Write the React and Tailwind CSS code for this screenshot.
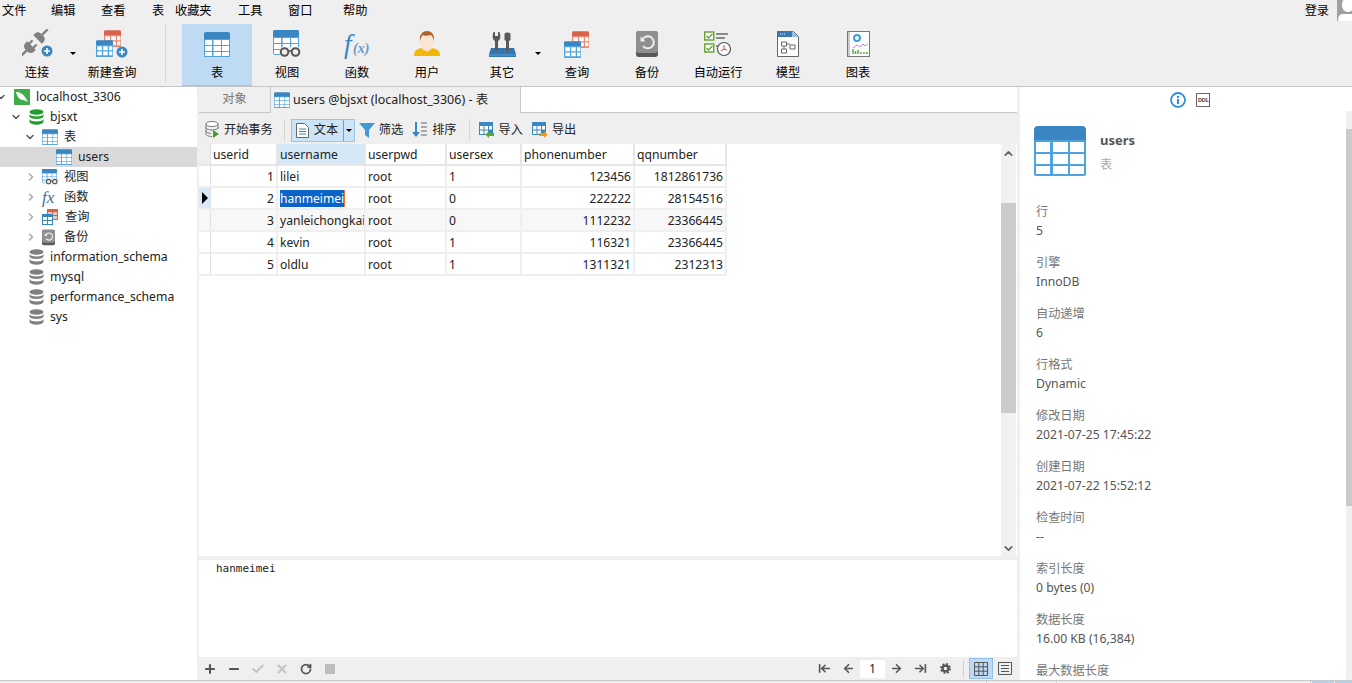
import React from 'react';
import { ArrowLeft, ArrowLeftToLine, ArrowRight, ArrowRightToLine, Check, ChevronDown, ChevronRight, ChevronUp, Minus, Plus, RotateCw, X } from 'lucide-react';

const TableIcon = ({ w = 26, h = 25, head = '#3a86c2', line = '#4fa3de' }) => (
  <svg width={w} height={h} viewBox="0 0 26 25" className="shrink-0">
    <rect x="0" y="0" width="26" height="25" rx="2" fill={head} />
    <rect x="0" y="7" width="26" height="18" rx="1" fill={line} />
    {[1, 9.5, 18].map((x) =>
      [8, 14, 20].map((y) => (
        <rect key={`${x}-${y}`} x={x} y={y} width={x === 9.5 ? 7.5 : 7} height={y === 20 ? 4 : 5} fill="#fff" />
      ))
    )}
  </svg>
);

const DbIcon = ({ color = '#7f7f7f' }) => (
  <svg width="15" height="16" viewBox="0 0 15 16" className="shrink-0">
    <ellipse cx="7.5" cy="3" rx="7" ry="2.8" fill={color} />
    <path d="M.5 5c1 1.800 3.500 2.500 7 2.500s6-.7 7-2.500v2.500c-1 1.800-3.500 2.500-7 2.500s-6-.7-7-2.500z" fill={color} />
    <path d="M.5 10c1 1.800 3.500 2.500 7 2.500s6-.7 7-2.500v3c-1 1.800-3.500 2.800-7 2.800s-6-1-7-2.800z" fill={color} />
  </svg>
);

const PlusBadge = ({ x, y }) => (
  <g>
    <circle cx={x} cy={y} r="5.500" fill="#3a86c2" />
    <path d={`M${x - 3} ${y}h6M${x} ${y - 3}v6`} stroke="#fff" strokeWidth="1.600" />
  </g>
);

const ConnectIcon = () => (
  <svg width="32" height="30" viewBox="0 0 32 30" className="ml-[2px]">
    <g transform="rotate(45 13 13)" fill="#808080">
      <path d="M7 3h12v3c0 2-2 3.500-4 3.500h-4C9 9.500 7 8 7 6z" transform="rotate(180 13 6.200)" />
      <rect x="11.800" y="-5" width="2.400" height="8" />
      <path d="M7 18h12v3c0 2-2 4-4 4h-4c-2 0-4-2-4-4z" />
      <rect x="9" y="13.500" width="2.200" height="5" />
      <rect x="14.800" y="13.500" width="2.200" height="5" />
      <rect x="11.800" y="24" width="2.400" height="8" />
    </g>
    <PlusBadge x={25} y={22} />
  </svg>
);

const QueryPair = () => (
  <>
    <svg x="8" y="0" width="17" height="17" viewBox="0 0 26 25">
      <rect width="26" height="25" rx="2" fill="#d9614a" />
      <rect y="7" width="26" height="18" fill="#e58a74" />
      <path d="M2 9h7v6H2zM11 9h7v6h-7zM20 9h5v6h-5zM2 17h7v6H2zM11 17h7v6h-7zM20 17h5v6h-5z" fill="#fff" />
    </svg>
    <svg x="0" y="10" width="17" height="17" viewBox="0 0 26 25">
      <rect width="26" height="25" rx="2" fill="#3a86c2" />
      <rect y="7" width="26" height="18" fill="#4fa3de" />
      <path d="M2 9h7v6H2zM11 9h7v6h-7zM20 9h5v6h-5zM2 17h7v6H2zM11 17h7v6h-7zM20 17h5v6h-5z" fill="#fff" />
    </svg>
  </>
);

const NewQueryIcon = () => (
  <svg width="33" height="28" viewBox="0 0 33 28">
    <QueryPair />
    <PlusBadge x={26} y={22} />
  </svg>
);

const QueryIcon = () => (
  <svg width="26" height="27" viewBox="0 0 26 27">
    <QueryPair />
  </svg>
);

const ViewIcon = ({ size = 28 }) => (
  <svg width={size} height={size} viewBox="0 0 28 28" className="shrink-0">
    <rect width="26" height="25" rx="2" fill="#4fa3de" />
    <rect width="26" height="7" rx="2" fill="#3a86c2" />
    <path d="M1 8h7v5H1zM9.500 8H17v5H9.500zM18 8h7v5h-7zM1 14h7v5H1zM9.500 14H17v5H9.500zM18 14h7v5h-7zM1 20h7v4H1z" fill="#fff" />
    <rect x="7" y="17" width="21" height="11" fill="#efefef" />
    <circle cx="11.500" cy="22" r="3.800" fill="none" stroke="#555" strokeWidth="2" />
    <circle cx="22.500" cy="22" r="3.800" fill="none" stroke="#555" strokeWidth="2" />
    <path d="M15 21h4" stroke="#555" strokeWidth="1.500" />
  </svg>
);

const FxIcon = () => (
  <svg width="32" height="34" viewBox="0 0 32 34">
    <text x="3" y="26" fontFamily="Liberation Serif" fontStyle="italic" fontSize="27" fill="#3a86c2">f</text>
    <text x="12" y="26" fontFamily="Liberation Serif" fontStyle="italic" fontWeight="700" fontSize="14" fill="#6c98bd">(x)</text>
  </svg>
);

const UserIcon = () => (
  <svg width="26" height="28" viewBox="0 0 26 28">
    <path d="M0 26c0-5 2-7 8-8h10c6 1 8 3 8 8z" fill="#f2b705" />
    <path d="M9 15h8l1 4-5 3-5-3z" fill="#f8dcc8" />
    <ellipse cx="13" cy="11" rx="7" ry="9" fill="#fbe5d6" />
    <path d="M6 11C5 4 9 1 13 1s8 3 7 10c-1-4-2-5-3-6-3 1-7 1-8 0-1 1-2 2-3 6z" fill="#b4622a" />
  </svg>
);

const ToolsIcon = () => (
  <svg width="27" height="26" viewBox="0 0 27 26">
    <path d="M2 17h23l2 6v3H0v-3z" fill="#3278ae" />
    <path d="M0 24h27" stroke="#5b9fd0" />
    <path d="M6 20V10C3.500 9 3 5 4.500 1l1.500 0v4h3V1l1.500 0C12 5 11.500 9 9 10v10z" fill="#595959" />
    <path d="M17 20V10l-1.500-1V3c0-2 6-2 6 0v6L20 10v10z" fill="#595959" />
  </svg>
);

const BackupIcon = ({ size = 22 }) => (
  <svg width={size} height={size + 4} viewBox="0 0 22 26" className="shrink-0">
    <rect width="22" height="26" rx="3" fill="#595959" />
    <rect width="22" height="22" rx="3" fill="#8f8f8f" />
    <path d="M6.500 8.500A6 6 0 1 1 7 15" fill="none" stroke="#eee" strokeWidth="2" />
    <path d="M4.500 5.500v5h5z" fill="#eee" />
  </svg>
);

const AutoRunIcon = () => (
  <svg width="28" height="26" viewBox="0 0 28 26">
    <rect x=".75" y="1" width="9" height="8" fill="#fff" stroke="#6aa53c" strokeWidth="1.500" />
    <path d="M2.500 5l2 2 4-4" fill="none" stroke="#6aa53c" strokeWidth="1.500" />
    <rect x=".75" y="13" width="9" height="8" fill="#fff" stroke="#6aa53c" strokeWidth="1.500" />
    <path d="M2.500 17l2 2 4-4" fill="none" stroke="#6aa53c" strokeWidth="1.500" />
    <path d="M12 3h12M12 7h9M12 15h3" stroke="#8a8a8a" strokeWidth="1.800" />
    <circle cx="20" cy="18" r="6.500" fill="#fff" stroke="#555" strokeWidth="1.200" />
    <path d="M20 14v4l-3 2M20 18l3 1" stroke="#c9503c" strokeWidth="1" fill="none" />
  </svg>
);

const ModelIcon = () => (
  <svg width="22" height="26" viewBox="0 0 22 26">
    <path d="M.5.500h16l5 5v20H.5z" fill="#fff" stroke="#666" />
    <path d="M0 0h15v6H0z" fill="#3a78b0" />
    <path d="M15 0l7 6h-7z" fill="#8fc0e8" />
    <path d="M3 3h1M5 3h1M7 3h1" stroke="#fff" />
    <path d="M4.500 11h5v4h-5zM4.500 18h5v4h-5zM13 14h5v4h-5zM9.500 13H13M7 15v3" fill="none" stroke="#666" strokeWidth="1" />
  </svg>
);

const ChartIcon = () => (
  <svg width="23" height="26" viewBox="0 0 23 26">
    <rect x=".5" y=".5" width="22" height="25" fill="#fff" stroke="#777" />
    <path d="M2 1v24" stroke="#999" />
    <circle cx="10" cy="7" r="3" fill="none" stroke="#35a0dc" strokeWidth="2" />
    <path d="M6 17l4-3 3 2 3-3 2 2 3-2" fill="none" stroke="#c58ad6" strokeWidth="1" />
    <path d="M6 23v-5M8.500 23v-3M11 23v-4M14 23v-2M17 23v-2M20 23v-2" stroke="#57a83c" strokeWidth="1.500" />
  </svg>
);

const MiniQuery = () => (
  <svg width="17" height="17" viewBox="0 0 17 17" className="shrink-0">
    <rect x="5" y="0" width="11" height="11" fill="#d9614a" />
    <path d="M6 3h4v3H6zM11 3h4v3h-4zM11 7h4v3h-4z" fill="#f4c4b8" />
    <rect x="0" y="5" width="11" height="11" fill="#3a86c2" />
    <path d="M1 8h4v3H1zM6 8h4v3H6zM1 12h4v3H1zM6 12h4v3H6z" fill="#fff" />
  </svg>
);

const Caret = () => <span className="block w-0 h-0 border-x-[3px] border-x-transparent border-t-[3px] border-t-black" />;

const TopTool = ({ label, icon, active, width = 'w-[70px]', children }) => (
  <div className={`relative h-[62px] flex flex-col items-center shrink-0 ${width} ${active ? 'bg-[#bfdbf3] border-b border-b-[#90c8f6]' : ''}`}>
    <div className="h-[38px] flex items-center justify-center pt-[2px]">{icon}</div>
    <span className="mt-[3px] leading-[16px] text-black">{label}</span>
    {children}
  </div>
);

const menus = [
  ['文件', 'w-[49px]'],
  ['编辑', 'w-[50px]'],
  ['查看', 'w-[51px]'],
  ['表', 'w-[23px]'],
  ['收藏夹', 'w-[63px]'],
  ['工具', 'w-[50px]'],
  ['窗口', 'w-[55px]'],
  ['帮助', 'w-[40px]'],
];

const TreeRow = ({ pad, chevron, icon, text, gap = 'gap-[6px]', selected }) => (
  <div className={`relative h-[20px] flex items-center ${gap} ${pad} ${selected ? 'bg-[#d9d9d9]' : ''}`}>
    {chevron}
    {icon}
    <span className="text-[#222] whitespace-nowrap">{text}</span>
  </div>
);

const Open = ({ left }) => <ChevronDown size={12} strokeWidth={3} className={`absolute top-[4px] text-[#555] ${left}`} />;
const Shut = () => <ChevronRight size={12} strokeWidth={3} className="absolute top-[4px] left-[25px] text-[#aaa]" />;

const columns = [
  { name: 'userid', w: 'w-[67px]', right: true },
  { name: 'username', w: 'w-[88px]' },
  { name: 'userpwd', w: 'w-[81px]' },
  { name: 'usersex', w: 'w-[75px]' },
  { name: 'phonenumber', w: 'w-[113px]', right: true },
  { name: 'qqnumber', w: 'w-[92px]', right: true },
];

const rows = [
  ['1', 'lilei', 'root', '1', '123456', '1812861736'],
  ['2', 'hanmeimei', 'root', '0', '222222', '28154516'],
  ['3', 'yanleichongkai', 'root', '0', '1112232', '23366445'],
  ['4', 'kevin', 'root', '1', '116321', '23366445'],
  ['5', 'oldlu', 'root', '1', '1311321', '2312313'],
];

const info = [
  ['行', '5'],
  ['引擎', 'InnoDB'],
  ['自动递增', '6'],
  ['行格式', 'Dynamic'],
  ['修改日期', '2021-07-25 17:45:22'],
  ['创建日期', '2021-07-22 15:52:12'],
  ['检查时间', '--'],
  ['索引长度', '0 bytes (0)'],
  ['数据长度', '16.00 KB (16,384)'],
  ['最大数据长度', ''],
];

const SmallTool = ({ icon, label, className = '' }) => (
  <div className={`flex items-center gap-[4px] shrink-0 ${className}`}>
    {icon}
    <span className="text-[#222]">{label}</span>
  </div>
);

const ImportIcon = ({ color, flip }) => (
  <svg width="16" height="16" viewBox="0 0 16 16" className="shrink-0">
    <rect width="14" height="13" fill="#3a86c2" />
    <path d="M1 4h3.500v3.500H1zM5.500 4H9v3.500H5.500zM10 4h3v3.500h-3zM1 8.500h3.500V12H1zM5.500 8.500H9V12H5.500z" fill="#fff" />
    <path d={flip ? 'M7 11h5v-2l3.500 3.500L12 16v-2H7z' : 'M15 11h-5V9l-3.500 3.500L10 16v-2h5z'} fill={color} />
  </svg>
);

export default function App() {
  return (
    <div className="w-[1352px] h-[683px] overflow-hidden flex flex-col bg-white text-[12.2px] font-['Noto_Sans','Noto_Sans_CJK_SC',sans-serif]">
      {/* menu + big toolbar */}
      <header className="h-[87px] shrink-0 bg-[#efefef] border-b border-b-[#c4c4c4]">
        <div className="relative h-[21px] flex items-center pl-[2px] leading-[18px] text-black">
          {menus.map(([m, w]) => (
            <span key={m} className={w}>{m}</span>
          ))}
          <span className="ml-auto mr-[23px]">登录</span>
          <span className="absolute right-0 top-0 w-[15px] h-[21px] bg-[#a0a0a0] overflow-hidden">
            <span className="absolute left-[5px] top-[-2px] w-[12px] h-[14px] rounded-full bg-white" />
            <span className="absolute left-[1px] top-[14px] w-[18px] h-[10px] rounded-full bg-white" />
          </span>
        </div>
        <div className="flex items-start pt-[3px] pl-[2px]">
          <TopTool label="连接" icon={<ConnectIcon />}>
            <span className="absolute left-[68px] top-[28px]"><Caret /></span>
          </TopTool>
          <TopTool label="新建查询" icon={<NewQueryIcon />} width="w-[70px] ml-[5px]" />
          <div className="w-px h-[58px] bg-[#d4d4d4] ml-[18px] mr-[16px]" />
          <TopTool label="表" active icon={<TableIcon />} />
          <TopTool label="视图" icon={<ViewIcon />} />
          <TopTool label="函数" icon={<FxIcon />} />
          <TopTool label="用户" icon={<UserIcon />} />
          <TopTool label="其它" icon={<ToolsIcon />} width="w-[70px] ml-[5px]">
            <span className="absolute left-[68px] top-[28px]"><Caret /></span>
          </TopTool>
          <TopTool label="查询" icon={<QueryIcon />} width="w-[70px] ml-[5px]" />
          <TopTool label="备份" icon={<BackupIcon />} />
          <TopTool label="自动运行" icon={<AutoRunIcon />} width="w-[70px] ml-px" />
          <TopTool label="模型" icon={<ModelIcon />} />
          <TopTool label="图表" icon={<ChartIcon />} />
        </div>
      </header>

      <div className="flex-1 min-h-0 flex">
        {/* connection tree */}
        <aside className="w-[197px] shrink-0 bg-white overflow-hidden">
          <TreeRow
            pad="pl-[14px]"
            text="localhost_3306"
            chevron={<Open left="left-[-5px]" />}
            icon={
              <svg width="16" height="16" viewBox="0 0 16 16" className="shrink-0">
                <rect width="16" height="16" rx="1" fill="#3fae49" />
                <path d="M2 3c4 0 7 2 9 5 1 2 2 3 3 5-2-1-4-2-5-2-3 0-6-3-7-8z" fill="#fff" />
              </svg>
            }
          />
          <TreeRow pad="pl-[29px]" text="bjsxt" chevron={<Open left="left-[10px]" />} icon={<DbIcon color="#1f9e2d" />} />
          <TreeRow pad="pl-[42px]" text="表" chevron={<Open left="left-[24px]" />} icon={<TableIcon w={16} h={16} />} />
          <TreeRow pad="pl-[56px]" text="users" selected icon={<TableIcon w={16} h={16} />} />
          <TreeRow pad="pl-[42px]" text="视图" chevron={<Shut />} icon={<ViewIcon size={16} />} />
          <TreeRow
            pad="pl-[42px]"
            text="函数"
            chevron={<Shut />}
            icon={<span className="w-[16px] font-['Liberation_Serif'] italic text-[17px] leading-none text-[#3a6f9c]">fx</span>}
          />
          <TreeRow pad="pl-[42px]" text="查询" chevron={<Shut />} icon={<MiniQuery />} />
          <TreeRow pad="pl-[42px]" text="备份" chevron={<Shut />} icon={<BackupIcon size={13} />} gap="gap-[9px]" />
          <TreeRow pad="pl-[29px]" text="information_schema" icon={<DbIcon />} />
          <TreeRow pad="pl-[29px]" text="mysql" icon={<DbIcon />} />
          <TreeRow pad="pl-[29px]" text="performance_schema" icon={<DbIcon />} />
          <TreeRow pad="pl-[29px]" text="sys" icon={<DbIcon />} />
        </aside>

        {/* main editor */}
        <main className="w-[823px] shrink-0 bg-[#efefef] flex flex-col min-h-0 pl-[2px] pr-[3px]">
          <div className="h-[26px] shrink-0 flex bg-white">
            <div className="w-[71px] flex items-center justify-center bg-[#efefef] text-[#777] border-b border-b-[#c8c8c8]">对象</div>
            <div className="w-[251px] flex items-center gap-[3px] pl-[3px] bg-[#efefef] border-x border-x-[#c8c8c8] text-[#222] whitespace-nowrap text-[12.5px]">
              <TableIcon w={16} h={16} />
              <span>users @bjsxt (localhost_3306) - 表</span>
            </div>
            <div className="flex-1 border-b border-b-[#c8c8c8]" />
          </div>
          <div className="h-[31px] shrink-0 flex items-center pl-[6px] pt-[3px]">
            <SmallTool
              label="开始事务"
              icon={
                <svg width="15" height="17" viewBox="0 0 15 17" className="shrink-0">
                  <ellipse cx="7" cy="3" rx="6" ry="2.500" fill="#fff" stroke="#777" />
                  <path d="M1 3v10c0 1.500 3 2.500 6 2.500M13 3v5M1 6.500c0 1.500 3 2.500 6 2.500s6-1 6-2.500M1 10c0 1.500 3 2.500 5 2.500" fill="none" stroke="#777" />
                  <path d="M8 9l6 4-6 4z" fill="#4a9c2e" />
                </svg>
              }
            />
            <div className="w-px h-[22px] bg-[#d4d4d4] ml-[11px] mr-[6px]" />
            <div className="w-[64px] h-[23px] flex items-center bg-[#cde3f6] border border-[#98c6ec] shrink-0">
              <div className="flex-1 flex items-center gap-[5px] pl-[4px] border-r border-r-[#7a9ebd] h-full">
                <svg width="13" height="15" viewBox="0 0 13 15" className="shrink-0">
                  <path d="M.5.500h8l4 4v10H.5z" fill="#fff" stroke="#666" />
                  <path d="M3 6h7M3 8.500h7M3 11h7" stroke="#3a86c2" />
                </svg>
                <span className="text-[#222]">文本</span>
              </div>
              <div className="w-[10px] flex justify-center"><Caret /></div>
            </div>
            <SmallTool
              className="ml-[4px]"
              label="筛选"
              icon={
                <svg width="16" height="16" viewBox="0 0 16 16" className="shrink-0">
                  <path d="M0 1h16L10 8v8l-4-3V8z" fill="#3f9ad6" />
                </svg>
              }
            />
            <SmallTool
              className="ml-[9px]"
              label="排序"
              icon={
                <svg width="16" height="17" viewBox="0 0 16 17" className="shrink-0">
                  <path d="M4 1v12" stroke="#3a86c2" strokeWidth="2" />
                  <path d="M0 11h8l-4 5z" fill="#3a86c2" />
                  <path d="M9 2h6M9 6h6M9 10h6M9 14h6" stroke="#666" />
                </svg>
              }
            />
            <div className="w-px h-[22px] bg-[#d4d4d4] ml-[12px] mr-[9px]" />
            <SmallTool label="导入" icon={<ImportIcon color="#5aa53c" />} />
            <SmallTool className="ml-[9px]" label="导出" icon={<ImportIcon color="#e9962c" flip />} />
          </div>

          {/* grid */}
          <div className="h-[412px] shrink-0 flex bg-white min-h-0">
            <div className="flex-1 min-w-0">
              <div className="flex w-fit h-[22px] border-b-2 border-b-[#e6e6e6]">
                <div className="w-[12px] bg-[#efefef] border-r border-r-[#e0e0e0]" />
                {columns.map((c) => (
                  <div
                    key={c.name}
                    className={`${c.w} pl-[2px] border-r-2 border-r-[#e6e6e6] leading-[22px] text-[#222] ${c.name === 'username' ? 'bg-[#d5e8f8]' : ''}`}
                  >
                    {c.name}
                  </div>
                ))}
              </div>
              {rows.map((row, i) => (
                <div key={row[0]} className={`flex w-fit h-[22px] border-b-2 border-b-[#efefef] text-[12.1px] ${i === 2 ? 'bg-[#f7f7f7]' : ''}`}>
                  <div className={`w-[12px] flex items-center pl-[3px] border-r border-r-[#e0e0e0] ${i === 1 ? 'bg-[#d9e9f7]' : ''}`}>
                    {i === 1 && <span className="w-0 h-0 border-y-[6px] border-y-transparent border-l-[6px] border-l-black" />}
                  </div>
                  {row.map((v, j) => (
                    <div
                      key={j}
                      className={`${columns[j].w} px-[2px] border-r-2 border-r-[#efefef] leading-[22px] text-[#222] overflow-hidden whitespace-nowrap ${columns[j].right ? 'text-right' : ''}`}
                    >
                      {i === 1 && j === 1 ? <span className="bg-[#0a64c8] text-white border-r border-r-[#e9762c]">{v}</span> : v}
                    </div>
                  ))}
                </div>
              ))}
            </div>
            <div className="w-[15px] mr-px shrink-0 bg-[#f1f1f1] flex flex-col items-center text-[#606060]">
              <ChevronUp size={13} strokeWidth={3} className="mt-[3px] shrink-0" />
              <div className="w-full h-[210px] mt-[43px] bg-[#cbcbcb] shrink-0" />
              <ChevronDown size={13} strokeWidth={3} className="mt-auto mb-[1px] shrink-0" />
            </div>
          </div>

          {/* cell text preview */}
          <div className="h-[97px] mt-[4px] shrink-0 bg-white pl-[17px] pt-[1px] font-['DejaVu_Sans_Mono',monospace] text-[11px] leading-[15px] text-[#222]">
            hanmeimei
          </div>

          {/* bottom bar */}
          <div className="h-[23px] shrink-0 flex items-center pl-[4px] text-[#555]">
            <Plus size={14} strokeWidth={3.500} />
            <Minus size={14} strokeWidth={3.500} className="ml-[10px]" />
            <Check size={14} strokeWidth={3.500} className="ml-[10px] text-[#c4c4c4]" />
            <X size={14} strokeWidth={3.500} className="ml-[10px] text-[#c4c4c4]" />
            <RotateCw size={12} strokeWidth={3.500} className="ml-[11px]" />
            <span className="ml-[13px] w-[10px] h-[10px] bg-[#bdbdbd]" />
            <ArrowLeftToLine size={13} strokeWidth={3} className="ml-auto" />
            <ArrowLeft size={13} strokeWidth={3} className="ml-[11px]" />
            <span className="ml-[5px] w-[25px] h-[18px] bg-white text-center leading-[18px] text-[#222]">1</span>
            <ArrowRight size={13} strokeWidth={3} className="ml-[5px]" />
            <ArrowRightToLine size={13} strokeWidth={3} className="ml-[11px]" />
            <svg width="11" height="11" viewBox="0 0 12 12" className="ml-[13px] shrink-0">
              <circle cx="6" cy="6" r="3.200" fill="none" stroke="#555" strokeWidth="2.400" />
              <circle cx="6" cy="6" r="5" fill="none" stroke="#555" strokeWidth="2" strokeDasharray="2 1.930" />
            </svg>
            <div className="w-px h-[16px] bg-[#cfcfcf] ml-[12px] mr-[5px]" />
            <div className="w-[24px] h-[21px] flex items-center justify-center bg-[#bfdbf3] border border-[#90c0e8]">
              <svg width="14" height="14" viewBox="0 0 14 14">
                <path d="M.5.500h13v13H.5zM.5 4.800h13M.5 9.200h13M4.800.500v13M9.200.500v13" fill="none" stroke="#555" />
              </svg>
            </div>
            <svg width="14" height="13" viewBox="0 0 14 13" className="ml-[5px] mr-[5px] shrink-0">
              <path d="M.5.500h13v12H.5zM3 3.500h8M3 6.500h8M3 9.500h8" fill="none" stroke="#555" />
            </svg>
          </div>
        </main>

        {/* info panel */}
        <aside className="relative flex-1 min-w-0 bg-white overflow-hidden">
          <div className="h-[25px] flex items-center gap-[10px] pl-[150px]">
            <svg width="16" height="16" viewBox="0 0 16 16">
              <circle cx="8" cy="8" r="7" fill="none" stroke="#2b8fe8" strokeWidth="1.800" />
              <path d="M8 4v2M8 7v5" stroke="#2b8fe8" strokeWidth="2" />
            </svg>
            <span className="w-[14px] h-[14px] border border-[#666] text-[6px] font-bold leading-[12px] text-center text-[#555] tracking-[-0.5px]">DDL</span>
          </div>
          <div className="flex gap-[14px] pl-[14px] pt-[14px]">
            <TableIcon w={52} h={50} />
            <div className="pt-[5px]">
              <div className="font-bold text-[13px] leading-[18px] text-[#555]">users</div>
              <div className="mt-[7px] leading-[18px] text-[#aaa]">表</div>
            </div>
          </div>
          <div className="pl-[16px] pt-[26px]">
            {info.map(([k, v]) => (
              <div key={k} className="h-[51px] pt-[1px]">
                <div className="leading-[18px] text-[#777]">{k}</div>
                <div className="leading-[18px] mt-[1px] text-[#555]">{v}</div>
              </div>
            ))}
          </div>
          {/* panel scrollbar */}
          <div className="absolute right-0 top-[24px] bottom-0 w-[6px] bg-[#f0f0f0] flex flex-col">
            <div className="h-[18px] shrink-0" />
            <div className="h-[377px] shrink-0 bg-[#cbcbcb]" />
          </div>
        </aside>
      </div>

      {/* status bar edge */}
      <div className="h-[3px] shrink-0 flex bg-[#efefef] border-t border-t-[#c8c8c8]">
        <div className="w-[987px] border-r border-r-[#d0d0d0]" />
        <div className="w-[70px] border-r border-r-[#d0d0d0]" />
        <div className="w-[254px] border-r border-r-[#d0d0d0]" />
        <div className="w-[22px] ml-[1px] bg-[#a9d3f7]" />
        <div className="flex-1 ml-[1px] bg-[#a9d3f7]" />
      </div>
    </div>
  );
}
